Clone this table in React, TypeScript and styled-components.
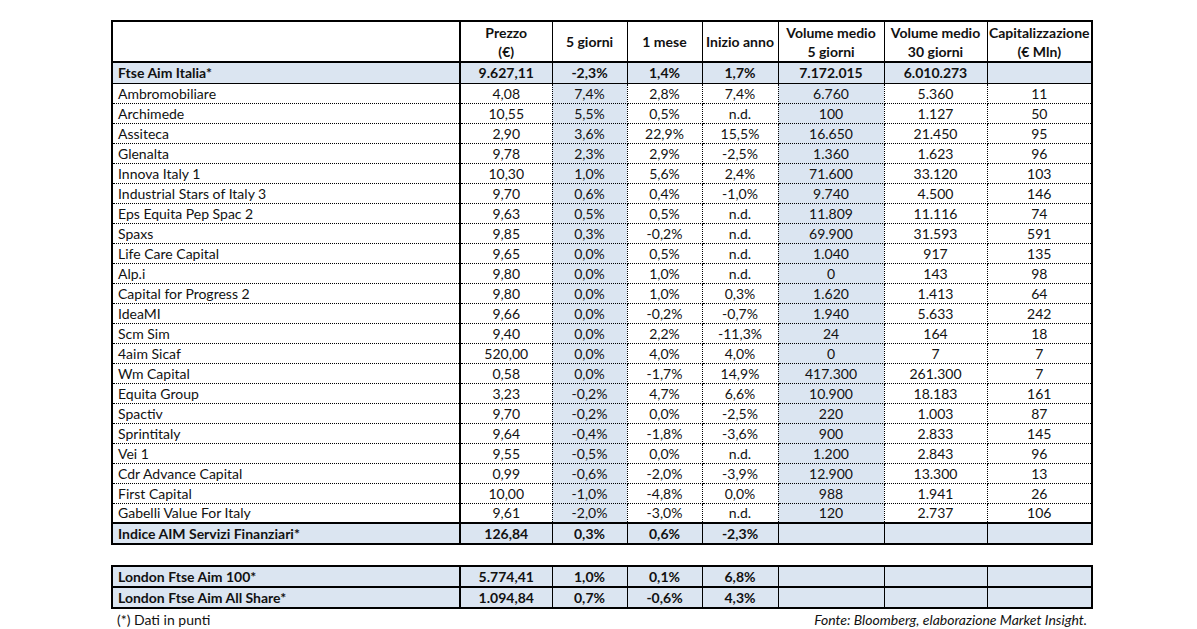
import React from "react";
import styled, { createGlobalStyle, css } from "styled-components";

const Global = createGlobalStyle`
  html, body { margin: 0; padding: 0; background: #fff; }
  body { font-family: Lato, "Open Sans", "Liberation Sans", sans-serif; color: #111; }
`;

const SHADE = "#dbe5f1";

const Page = styled.div`
  padding: 20px 0 0 111px;
  width: 980px;
`;

const Table = styled.table`
  border-collapse: collapse;
  width: 980px;
  table-layout: fixed;
  border: 2px solid #000;
  font-size: 14px;
  & + & { margin-top: 20px; }
`;

type RowKind = "head" | "index" | "data" | "lastData" | "london";

const Row = styled.tr<{ $kind: RowKind }>`
  ${(p) => p.$kind === "head" && css`
    height: 41px;
    & > td { border-right: 1px solid #000; border-bottom: 2px solid #000; font-weight: 700; line-height: 19px; }
  `}
  ${(p) => p.$kind === "index" && css`
    height: 21px;
    & > td { border-right: 1px solid #000; border-bottom: 1px solid #000; font-weight: 700; background: ${SHADE}; }
  `}
  ${(p) => (p.$kind === "data" || p.$kind === "lastData") && css`
    height: 20px;
    & > td { border-right: 1px dotted #000; border-bottom: 1px dotted #000; }
  `}
  ${(p) => p.$kind === "lastData" && css`
    & > td { border-bottom: 2px solid #000; }
  `}
  ${(p) => p.$kind === "london" && css`
    height: 21px;
    & > td { border-right: 1px solid #000; border-bottom: 2px solid #000; font-weight: 700; background: ${SHADE}; }
  `}
`;

const Cell = styled.td<{ $name?: boolean; $shade?: boolean }>`
  padding: 0;
  text-align: center;
  vertical-align: middle;
  white-space: nowrap;
  ${(p) => p.$name && css`
    text-align: left;
    padding-left: 5px;
    && { border-right: 2px solid #000; }
  `}
  ${(p) => p.$shade && css`background: ${SHADE};`}
`;

const Footer = styled.div`
  display: flex;
  justify-content: space-between;
  align-items: center;
  font-size: 14px;
  padding: 2px 4px 0 6px;
  line-height: 18px;
`;

const Source = styled.span`
  font-style: italic;
`;

const widths = [348, 92, 75, 75, 76, 106, 103, 105];

const data: string[][] = [
  ["Ambromobiliare", "4,08", "7,4%", "2,8%", "7,4%", "6.760", "5.360", "11"],
  ["Archimede", "10,55", "5,5%", "0,5%", "n.d.", "100", "1.127", "50"],
  ["Assiteca", "2,90", "3,6%", "22,9%", "15,5%", "16.650", "21.450", "95"],
  ["Glenalta", "9,78", "2,3%", "2,9%", "-2,5%", "1.360", "1.623", "96"],
  ["Innova Italy 1", "10,30", "1,0%", "5,6%", "2,4%", "71.600", "33.120", "103"],
  ["Industrial Stars of Italy 3", "9,70", "0,6%", "0,4%", "-1,0%", "9.740", "4.500", "146"],
  ["Eps Equita Pep Spac 2", "9,63", "0,5%", "0,5%", "n.d.", "11.809", "11.116", "74"],
  ["Spaxs", "9,85", "0,3%", "-0,2%", "n.d.", "69.900", "31.593", "591"],
  ["Life Care Capital", "9,65", "0,0%", "0,5%", "n.d.", "1.040", "917", "135"],
  ["Alp.i", "9,80", "0,0%", "1,0%", "n.d.", "0", "143", "98"],
  ["Capital for Progress 2", "9,80", "0,0%", "1,0%", "0,3%", "1.620", "1.413", "64"],
  ["IdeaMI", "9,66", "0,0%", "-0,2%", "-0,7%", "1.940", "5.633", "242"],
  ["Scm Sim", "9,40", "0,0%", "2,2%", "-11,3%", "24", "164", "18"],
  ["4aim Sicaf", "520,00", "0,0%", "4,0%", "4,0%", "0", "7", "7"],
  ["Wm Capital", "0,58", "0,0%", "-1,7%", "14,9%", "417.300", "261.300", "7"],
  ["Equita Group", "3,23", "-0,2%", "4,7%", "6,6%", "10.900", "18.183", "161"],
  ["Spactiv", "9,70", "-0,2%", "0,0%", "-2,5%", "220", "1.003", "87"],
  ["Sprintitaly", "9,64", "-0,4%", "-1,8%", "-3,6%", "900", "2.833", "145"],
  ["Vei 1", "9,55", "-0,5%", "0,0%", "n.d.", "1.200", "2.843", "96"],
  ["Cdr Advance Capital", "0,99", "-0,6%", "-2,0%", "-3,9%", "12.900", "13.300", "13"],
  ["First Capital", "10,00", "-1,0%", "-4,8%", "0,0%", "988", "1.941", "26"],
  ["Gabelli Value For Italy", "9,61", "-2,0%", "-3,0%", "n.d.", "120", "2.737", "106"],
];

const header: React.ReactNode[] = [
  "",
  <>Prezzo<br />(€)</>,
  "5 giorni",
  "1 mese",
  "Inizio anno",
  <>Volume medio<br />5 giorni</>,
  <>Volume medio<br />30 giorni</>,
  <>Capitalizzazione<br />(€ Mln)</>,
];

const Cols = () => (
  <colgroup>
    {widths.map((w, i) => (
      <col key={i} style={{ width: w }} />
    ))}
  </colgroup>
);

const SummaryRow = ({ kind, values }: { kind: RowKind; values: string[] }) => (
  <Row $kind={kind}>
    {values.map((v, i) => (
      <Cell key={i} $name={i === 0}>{v}</Cell>
    ))}
  </Row>
);

export default function App() {
  return (
    <>
      <Global />
      <Page>
        <Table>
          <Cols />
          <tbody>
            <Row $kind="head">
              {header.map((h, i) => (
                <Cell key={i} $name={i === 0}>{h}</Cell>
              ))}
            </Row>
            <SummaryRow kind="index" values={["Ftse Aim Italia*", "9.627,11", "-2,3%", "1,4%", "1,7%", "7.172.015", "6.010.273", ""]} />
            {data.map((r, ri) => (
              <Row key={ri} $kind={ri === data.length - 1 ? "lastData" : "data"}>
                {r.map((v, i) => (
                  <Cell key={i} $name={i === 0} $shade={i === 2 || i === 5}>{v}</Cell>
                ))}
              </Row>
            ))}
            <SummaryRow kind="index" values={["Indice AIM Servizi Finanziari*", "126,84", "0,3%", "0,6%", "-2,3%", "", "", ""]} />
          </tbody>
        </Table>
        <Table>
          <Cols />
          <tbody>
            <SummaryRow kind="london" values={["London Ftse Aim 100*", "5.774,41", "1,0%", "0,1%", "6,8%", "", "", ""]} />
            <SummaryRow kind="london" values={["London Ftse Aim All Share*", "1.094,84", "0,7%", "-0,6%", "4,3%", "", "", ""]} />
          </tbody>
        </Table>
        <Footer>
          <span>(*) Dati in punti</span>
          <Source>Fonte: Bloomberg, elaborazione Market Insight.</Source>
        </Footer>
      </Page>
    </>
  );
}
